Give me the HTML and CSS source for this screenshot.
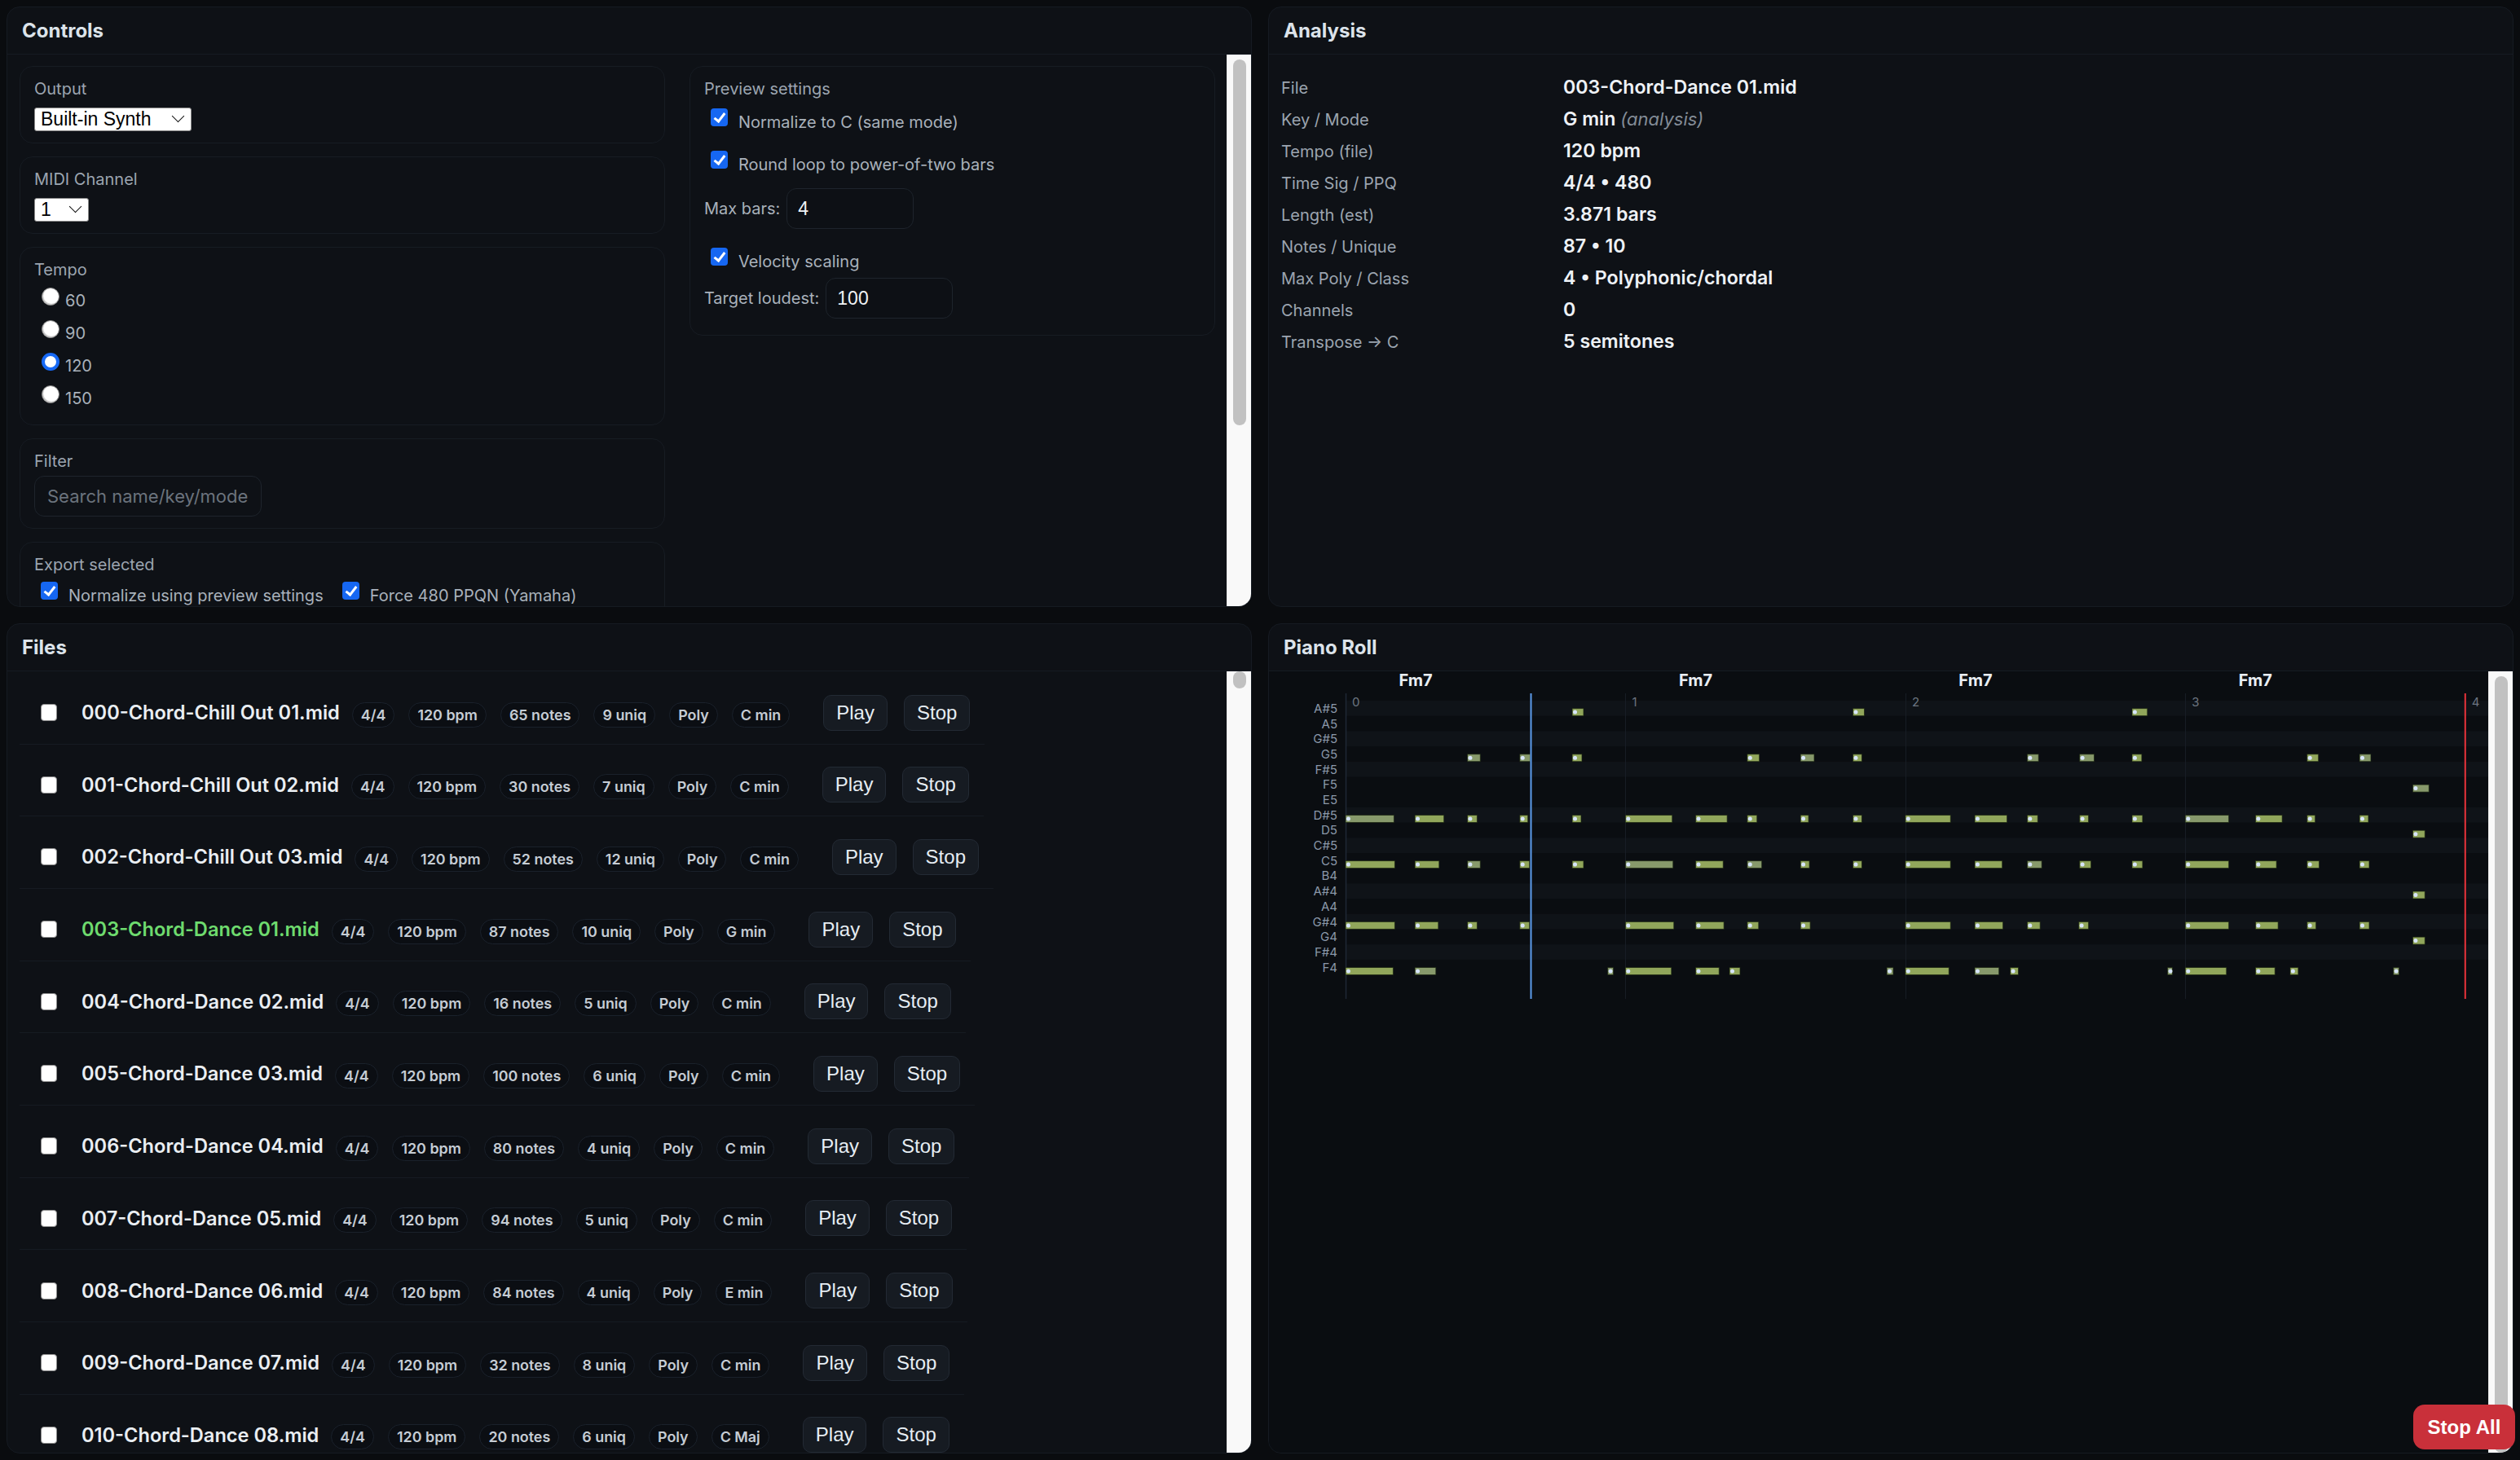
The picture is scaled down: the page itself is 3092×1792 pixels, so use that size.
FILE: index.html
```html
<!DOCTYPE html>
<html lang="en">
<head>
<meta charset="utf-8">
<title>MIDI Chord Browser</title>
<link rel="stylesheet" href="styles.css">
</head>
<body>
<main class="app">
  <section class="panel">
    <header class="panel-head"><h2>Controls</h2></header>
    <div class="panel-body scroller">
      <div class="scroll-content controls-content">
        <div class="controls-grid">
          <div class="stack">
            <div class="card">
              <label class="field-label">Output</label>
              <span class="select-wrap wide"><select class="select"><option>Built-in Synth</option></select></span>
            </div>
            <div class="card">
              <label class="field-label">MIDI Channel</label>
              <span class="select-wrap narrow"><select class="select"><option>1</option></select></span>
            </div>
            <div class="card card-tempo">
              <label class="field-label tight">Tempo</label>
              <label class="radio"><input type="radio" name="tempo"><span>60</span></label>
              <label class="radio"><input type="radio" name="tempo"><span>90</span></label>
              <label class="radio"><input type="radio" name="tempo" checked><span>120</span></label>
              <label class="radio"><input type="radio" name="tempo"><span>150</span></label>
            </div>
            <div class="card">
              <label class="field-label small-gap">Filter</label>
              <input class="text-input search" type="text" placeholder="Search name/key/mode">
            </div>
            <div class="card card-export">
              <label class="field-label export-label">Export selected</label>
              <div class="check-line">
                <label class="check"><input type="checkbox" checked><span>Normalize using preview settings</span></label>
                <label class="check"><input type="checkbox" checked><span>Force 480 PPQN (Yamaha)</span></label>
              </div>
            </div>
          </div>
          <div class="stack">
            <div class="card card-preview">
              <label class="field-label pv-label">Preview settings</label>
              <label class="check pv-row1"><input type="checkbox" checked><span>Normalize to C (same mode)</span></label>
              <label class="check pv-row2"><input type="checkbox" checked><span>Round loop to power-of-two bars</span></label>
              <div class="field-row pv-row3"><span>Max bars:</span><input class="num-input" type="text" value="4"></div>
              <label class="check pv-row4"><input type="checkbox" checked><span>Velocity scaling</span></label>
              <div class="field-row pv-row5"><span>Target loudest:</span><input class="num-input" type="text" value="100"></div>
            </div>
          </div>
        </div>
      </div>
      <div class="scrollbar bar-controls"><div class="thumb thumb-controls"></div></div>
    </div>
  </section>

  <section class="panel">
    <header class="panel-head"><h2>Analysis</h2></header>
    <div class="panel-body analysis-body">
      <dl class="facts">
        <dt>File</dt><dd>003-Chord-Dance 01.mid</dd>
        <dt>Key / Mode</dt><dd>G min <em>(analysis)</em></dd>
        <dt>Tempo (file)</dt><dd>120 bpm</dd>
        <dt>Time Sig / PPQ</dt><dd>4/4 • 480</dd>
        <dt>Length (est)</dt><dd>3.871 bars</dd>
        <dt>Notes / Unique</dt><dd>87 • 10</dd>
        <dt>Max Poly / Class</dt><dd>4 • Polyphonic/chordal</dd>
        <dt>Channels</dt><dd>0</dd>
        <dt>Transpose → C</dt><dd>5 semitones</dd>
      </dl>
    </div>
  </section>

  <section class="panel">
    <header class="panel-head"><h2>Files</h2></header>
    <div class="panel-body scroller">
      <div class="scroll-content files-content">
        <div class="file-row">
          <input type="checkbox" class="file-check">
          <span class="file-name">000-Chord-Chill Out 01.mid</span>
          <span class="pills"><span class="pill">4/4</span><span class="pill">120 bpm</span><span class="pill">65 notes</span><span class="pill">9 uniq</span><span class="pill">Poly</span><span class="pill">C min</span></span>
          <span class="actions"><button class="btn">Play</button><button class="btn">Stop</button></span>
        </div>
        <div class="file-row">
          <input type="checkbox" class="file-check">
          <span class="file-name">001-Chord-Chill Out 02.mid</span>
          <span class="pills"><span class="pill">4/4</span><span class="pill">120 bpm</span><span class="pill">30 notes</span><span class="pill">7 uniq</span><span class="pill">Poly</span><span class="pill">C min</span></span>
          <span class="actions"><button class="btn">Play</button><button class="btn">Stop</button></span>
        </div>
        <div class="file-row">
          <input type="checkbox" class="file-check">
          <span class="file-name">002-Chord-Chill Out 03.mid</span>
          <span class="pills"><span class="pill">4/4</span><span class="pill">120 bpm</span><span class="pill">52 notes</span><span class="pill">12 uniq</span><span class="pill">Poly</span><span class="pill">C min</span></span>
          <span class="actions"><button class="btn">Play</button><button class="btn">Stop</button></span>
        </div>
        <div class="file-row">
          <input type="checkbox" class="file-check">
          <span class="file-name active">003-Chord-Dance 01.mid</span>
          <span class="pills"><span class="pill">4/4</span><span class="pill">120 bpm</span><span class="pill">87 notes</span><span class="pill">10 uniq</span><span class="pill">Poly</span><span class="pill">G min</span></span>
          <span class="actions"><button class="btn">Play</button><button class="btn">Stop</button></span>
        </div>
        <div class="file-row">
          <input type="checkbox" class="file-check">
          <span class="file-name">004-Chord-Dance 02.mid</span>
          <span class="pills"><span class="pill">4/4</span><span class="pill">120 bpm</span><span class="pill">16 notes</span><span class="pill">5 uniq</span><span class="pill">Poly</span><span class="pill">C min</span></span>
          <span class="actions"><button class="btn">Play</button><button class="btn">Stop</button></span>
        </div>
        <div class="file-row">
          <input type="checkbox" class="file-check">
          <span class="file-name">005-Chord-Dance 03.mid</span>
          <span class="pills"><span class="pill">4/4</span><span class="pill">120 bpm</span><span class="pill">100 notes</span><span class="pill">6 uniq</span><span class="pill">Poly</span><span class="pill">C min</span></span>
          <span class="actions"><button class="btn">Play</button><button class="btn">Stop</button></span>
        </div>
        <div class="file-row">
          <input type="checkbox" class="file-check">
          <span class="file-name">006-Chord-Dance 04.mid</span>
          <span class="pills"><span class="pill">4/4</span><span class="pill">120 bpm</span><span class="pill">80 notes</span><span class="pill">4 uniq</span><span class="pill">Poly</span><span class="pill">C min</span></span>
          <span class="actions"><button class="btn">Play</button><button class="btn">Stop</button></span>
        </div>
        <div class="file-row">
          <input type="checkbox" class="file-check">
          <span class="file-name">007-Chord-Dance 05.mid</span>
          <span class="pills"><span class="pill">4/4</span><span class="pill">120 bpm</span><span class="pill">94 notes</span><span class="pill">5 uniq</span><span class="pill">Poly</span><span class="pill">C min</span></span>
          <span class="actions"><button class="btn">Play</button><button class="btn">Stop</button></span>
        </div>
        <div class="file-row">
          <input type="checkbox" class="file-check">
          <span class="file-name">008-Chord-Dance 06.mid</span>
          <span class="pills"><span class="pill">4/4</span><span class="pill">120 bpm</span><span class="pill">84 notes</span><span class="pill">4 uniq</span><span class="pill">Poly</span><span class="pill">E min</span></span>
          <span class="actions"><button class="btn">Play</button><button class="btn">Stop</button></span>
        </div>
        <div class="file-row">
          <input type="checkbox" class="file-check">
          <span class="file-name">009-Chord-Dance 07.mid</span>
          <span class="pills"><span class="pill">4/4</span><span class="pill">120 bpm</span><span class="pill">32 notes</span><span class="pill">8 uniq</span><span class="pill">Poly</span><span class="pill">C min</span></span>
          <span class="actions"><button class="btn">Play</button><button class="btn">Stop</button></span>
        </div>
        <div class="file-row">
          <input type="checkbox" class="file-check">
          <span class="file-name">010-Chord-Dance 08.mid</span>
          <span class="pills"><span class="pill">4/4</span><span class="pill">120 bpm</span><span class="pill">20 notes</span><span class="pill">6 uniq</span><span class="pill">Poly</span><span class="pill">C Maj</span></span>
          <span class="actions"><button class="btn">Play</button><button class="btn">Stop</button></span>
        </div>
      </div>
      <div class="scrollbar bar-files"><div class="thumb thumb-files"></div></div>
    </div>
  </section>

  <section class="panel">
    <header class="panel-head"><h2>Piano Roll</h2></header>
    <div class="panel-body scroller roll-body">
      <div class="scroll-content roll-content">
        <svg id="roll" class="roll-svg" width="1496" height="410" viewBox="0 0 1496 410" xmlns="http://www.w3.org/2000/svg"></svg>
      </div>
      <div class="scrollbar bar-roll"><div class="thumb thumb-roll"></div></div>
    </div>
  </section>
</main>
<button class="stop-all">Stop All</button>
<script src="script.js"></script>
</body>
</html>
```

FILE: styles.css
```css
* { box-sizing: border-box; }
html, body { margin: 0; height: 100%; }
body {
  background: #0a0c0f;
  color: #c9d1d9;
  font-family: Inter, "Noto Sans", "Liberation Sans", sans-serif;
  overflow: hidden;
}
.app {
  display: grid;
  grid-template-columns: 1fr 1fr;
  grid-template-rows: 737px 1fr;
  gap: 20px;
  padding: 8px;
  height: 100vh;
}
.panel {
  display: flex;
  flex-direction: column;
  min-height: 0;
  background: #0e1116;
  border: 1px solid #161b22;
  border-radius: 16px;
  overflow: hidden;
}
.panel-head {
  flex: none;
  height: 58px;
  display: flex;
  align-items: center;
  padding: 0 18px;
  border-bottom: 1px solid #161b22;
}
.panel-head h2 {
  margin: 0;
  font-size: 24px;
  font-weight: 700;
  color: #dce3ea;
}
.panel-body { flex: 1; min-height: 0; overflow: hidden; }

/* scroll areas with their classic scrollbar */
.scroller { display: flex; }
.scroll-content { flex: 1; min-width: 0; overflow: hidden; }
.scrollbar {
  flex: none;
  width: 30px;
  background: #f9f9f9;
  box-shadow: inset 1px 0 0 #e9e9e9;
  padding: 6px 6px 6px 8px;
}
.thumb { background: #c1c1c1; border-radius: 8px; }
.thumb-controls { height: 449px; }
.bar-files { padding-top: 0; }
.thumb-files { height: 21px; }
.thumb-roll { height: 953px; }

/* Controls */
.controls-content { padding: 14px 14px 16px 15px; }
.controls-grid {
  display: grid;
  grid-template-columns: 793fr 646fr;
  gap: 30px;
  align-items: start;
}
.stack { display: flex; flex-direction: column; gap: 16px; }
.card {
  border: 1px solid #171c23;
  border-radius: 16px;
  padding: 15px 17px 14px;
  background: #0e1116;
}
.card-tempo { padding-bottom: 12px; }
.card-export { min-height: 383px; }
.card-preview { padding-bottom: 20px; }
.field-label {
  display: block;
  font-size: 20px;
  line-height: 24px;
  color: #9ca5b0;
  margin-bottom: 11px;
}
.field-label.tight { margin-bottom: 6px; }
.field-label.small-gap { margin-bottom: 6px; }
.field-label.export-label { margin-bottom: 5px; }
.field-label.pv-label { margin-bottom: 8px; }

.select-wrap { display: inline-block; position: relative; }
.select-wrap::after {
  content: "";
  position: absolute;
  top: 5px;
  right: 11px;
  width: 10px;
  height: 10px;
  border-right: 1.5px solid #111;
  border-bottom: 1.5px solid #111;
  transform: rotate(45deg);
  pointer-events: none;
}
.select {
  appearance: none;
  height: 29px;
  padding: 0 30px 0 7px;
  background: #fff;
  color: #000;
  border: 1px solid #8a8a8a;
  border-radius: 3px;
  font: 23px/27px "Liberation Sans", Arial, sans-serif;
}
.wide .select { width: 193px; }
.narrow .select { width: 67px; }

.radio { display: flex; align-items: flex-start; height: 40px; }
.radio input {
  appearance: none;
  flex: none;
  width: 22px;
  height: 22px;
  margin: 4px 7px 0 9px;
  border-radius: 50%;
  background: #fff;
  border: 1px solid #8a8a8a;
  box-shadow: inset 1px -1px 1px rgba(0,0,0,0.25);
}
.radio input:checked { border: 4px solid #1769f5; box-shadow: none; }
.radio span { margin-top: 8px; font-size: 20px; line-height: 24px; color: #a9b1bb; }

.check { display: flex; align-items: flex-start; height: 32px; }
.check input {
  appearance: none;
  flex: none;
  position: relative;
  width: 21px;
  height: 22px;
  margin: 4px 13px 0 8px;
  border-radius: 4px;
  background: #1667f2;
}
.check input::after {
  content: "";
  position: absolute;
  left: 7px;
  top: 3px;
  width: 5px;
  height: 11px;
  border: solid #fff;
  border-width: 0 3px 3px 0;
  transform: rotate(38deg);
}
.check span { margin-top: 9px; font-size: 20px; line-height: 24px; color: #a9b1bb; white-space: nowrap; }
.check-line { display: flex; gap: 15px; }

.pv-row2 { margin-top: 20px; }
.pv-row3 { margin-top: 18px; }
.pv-row4 { margin-top: 19px; }
.pv-row5 { margin-top: 9px; }
.field-row { display: flex; align-items: center; gap: 8px; font-size: 20px; color: #a9b1bb; }
.num-input {
  width: 156px;
  height: 50px;
  padding: 0 13px;
  background: #0d1015;
  border: 1px solid #1e242c;
  border-radius: 12px;
  color: #f0f3f6;
  font: 23px "Liberation Sans", Arial, sans-serif;
}
.text-input {
  display: block;
  height: 50px;
  padding: 0 15px;
  background: #0e1116;
  border: 1px solid #1e242c;
  border-radius: 12px;
  color: #e6edf3;
  font: 22px Inter, "Noto Sans", sans-serif;
}
.search { width: 279px; }
.text-input::placeholder { color: #6b737d; }

/* Analysis */
.analysis-body { padding: 21px 15px; }
.facts {
  margin: 0;
  display: grid;
  grid-template-columns: 346px 1fr;
  grid-auto-rows: 39px;
  align-items: center;
}
.facts dt { font-size: 20px; line-height: 39px; color: #9ca5b0; padding-top: 1px; }
.facts dd { margin: 0; font-size: 23.2px; line-height: 39px; font-weight: 600; color: #eef2f6; }
.facts em { font-weight: 400; color: #838c97; font-size: 22px; }

/* Files */
.files-content {
  padding: 12.5px 15px;
  display: flex;
  flex-direction: column;
  align-items: flex-start;
  gap: 11.7px;
}
.file-row {
  flex: none;
  display: flex;
  align-items: center;
  padding: 16px 18px 16px 26px;
  border-bottom: 1px solid #161b22;
}
.file-check {
  appearance: none;
  flex: none;
  width: 20px;
  height: 21px;
  margin: 0 30px 0 0;
  background: #fff;
  border: 1px solid #8a8a8a;
  border-radius: 4px;
}
.file-name {
  font-size: 23.6px;
  font-weight: 600;
  color: #eaeef2;
  margin-right: 15px;
  white-space: nowrap;
}
.file-name.active { color: #6edb6e; }
.pills { display: flex; gap: 17px; margin: 5px 41px 0 0; }
.pill {
  height: 31px;
  padding: 0 10px;
  border: 1px solid #1a212b;
  border-radius: 16px;
  background: #0b0e13;
  font-size: 17.9px;
  font-weight: 600;
  line-height: 29px;
  color: #c5ccd4;
  white-space: nowrap;
}
.actions { display: flex; gap: 20px; }
.btn {
  height: 44px;
  padding: 0 15px;
  background: #161b22;
  border: 1px solid #232a34;
  border-radius: 10px;
  color: #e6edf3;
  font: 24px "Liberation Sans", Arial, sans-serif;
}

/* Piano roll */
.roll-body { background: #0a0d11; }
.roll-svg { display: block; }
.roll-svg text { font-family: Inter, "Noto Sans", sans-serif; }

.stop-all {
  position: fixed;
  right: 6px;
  bottom: 13px;
  width: 125px;
  height: 55px;
  background: #c9303a;
  color: #fff;
  border: none;
  border-radius: 14px;
  font: 700 24px "Liberation Sans", Arial, sans-serif;
}
```

FILE: script.js
```js
(function () {
  var NS = "http://www.w3.org/2000/svg";
  var svg = document.getElementById("roll");
  var W = 1496, X0 = 94, BAR = 343.45, K = 0.9898;
  var TOP = 36, RH = 18.7, L0 = 27, L1 = 402;
  var names = ["A#5","A5","G#5","G5","F#5","F5","E5","D#5","D5","C#5","C5","B4","A#4","A4","G#4","G4","F#4","F4"];

  function el(tag, attrs, text) {
    var n = document.createElementNS(NS, tag);
    for (var k in attrs) n.setAttribute(k, attrs[k]);
    if (text != null) n.textContent = text;
    svg.appendChild(n);
    return n;
  }

  names.forEach(function (nm, i) {
    if (nm.indexOf("#") > 0) {
      el("rect", { x: X0 + 1, y: TOP + i * RH, width: W - X0 - 1, height: RH, fill: "#0f1318" });
    }
  });

  for (var b = 1; b <= 3; b++) {
    var lx = Math.round(X0 + b * BAR) + 0.5;
    el("line", { x1: lx, x2: lx, y1: L0, y2: L1, stroke: "#171d25", "stroke-width": 1 });
  }
  el("line", { x1: X0 + 0.5, x2: X0 + 0.5, y1: L0, y2: L1, stroke: "#1f2835", "stroke-width": 1.5 });

  names.forEach(function (nm, i) {
    el("text", { x: 84, y: (TOP + i * RH + RH / 2 + 5.4).toFixed(1), "text-anchor": "end", "font-size": 15, fill: "#8b98a9" }, nm);
  });

  for (var c = 0; c < 4; c++) {
    el("text", { x: (X0 + c * BAR + 86).toFixed(1), y: 18, "text-anchor": "middle", "font-size": 20, "font-weight": 700, fill: "#e9eef3" }, "Fm7");
  }
  for (var n = 0; n <= 4; n++) {
    el("text", { x: (X0 + n * BAR + 8).toFixed(1), y: 43, "font-size": 15, fill: "#6c7580" }, String(n));
  }

  // row -> per-bar list of [offset, length, grey]
  var D = {
    7: [[[0,60,1],[86,36],[151,12],[216,10],[281,11]],[[0,58],[87,39],[151,12],[217,10],[282,11]],[[0,56],[86,40],[151,13],[216,11],[281,13]],[[0,54,1],[87,33],[151,10],[216,11]]],
    10: [[[0,61],[86,30],[151,16,1],[216,12],[281,14]],[[0,59,1],[87,34],[151,18,1],[217,11],[282,11]],[[0,56],[86,34],[151,18,1],[216,14],[281,13]],[[0,54],[87,26],[151,15],[216,12]]],
    14: [[[0,61],[86,29],[151,12],[216,12]],[[0,60],[87,35],[151,14],[217,12]],[[0,56],[86,35],[151,16],[215,12]],[[0,54],[87,28],[151,11],[216,12]]],
    17: [[[0,59],[86,26,1],[325,7,1]],[[0,57],[87,29],[129,13],[324,8,1]],[[0,54],[86,30,1],[130,10],[325,6,1]],[[0,51],[87,24],[130,10],[258,7,1]]],
    3: [[[151,16,1],[216,13,1],[281,12]],[[151,15],[217,17,1],[282,11]],[[151,14,1],[216,18,1],[281,12]],[[151,14],[216,14,1]]],
    0: [[[281,14]],[[282,14]],[[281,19]],[]],
    5: [[],[],[],[[282,20,1]]],
    8: [[],[],[],[[282,15]]],
    12: [[],[],[],[[282,15]]],
    15: [[],[],[],[[282,15]]]
  };

  Object.keys(D).forEach(function (row) {
    var r = +row;
    D[row].forEach(function (notes, bar) {
      notes.forEach(function (nt) {
        var x = X0 + bar * BAR + nt[0] * K;
        var w = Math.max(nt[1] * K, 5);
        var y = TOP + r * RH + 9.6;
        el("rect", { x: x.toFixed(1), y: y.toFixed(1), width: w.toFixed(1), height: 9, fill: nt[2] ? "#87996b" : "#91a65b", stroke: "rgba(24,34,14,0.7)", "stroke-width": 1 });
        el("circle", { cx: (x + 3.4).toFixed(1), cy: (y + 4.5).toFixed(1), r: 2.5, fill: "#d7e5fb" });
      });
    });
  });

  el("line", { x1: 321.5, x2: 321.5, y1: L0, y2: L1, stroke: "#5d9cec", "stroke-width": 2 });
  var ex = X0 + 4 * BAR;
  el("line", { x1: ex.toFixed(1), x2: ex.toFixed(1), y1: L0, y2: L1, stroke: "#e8333a", "stroke-width": 2 });
})();
```
